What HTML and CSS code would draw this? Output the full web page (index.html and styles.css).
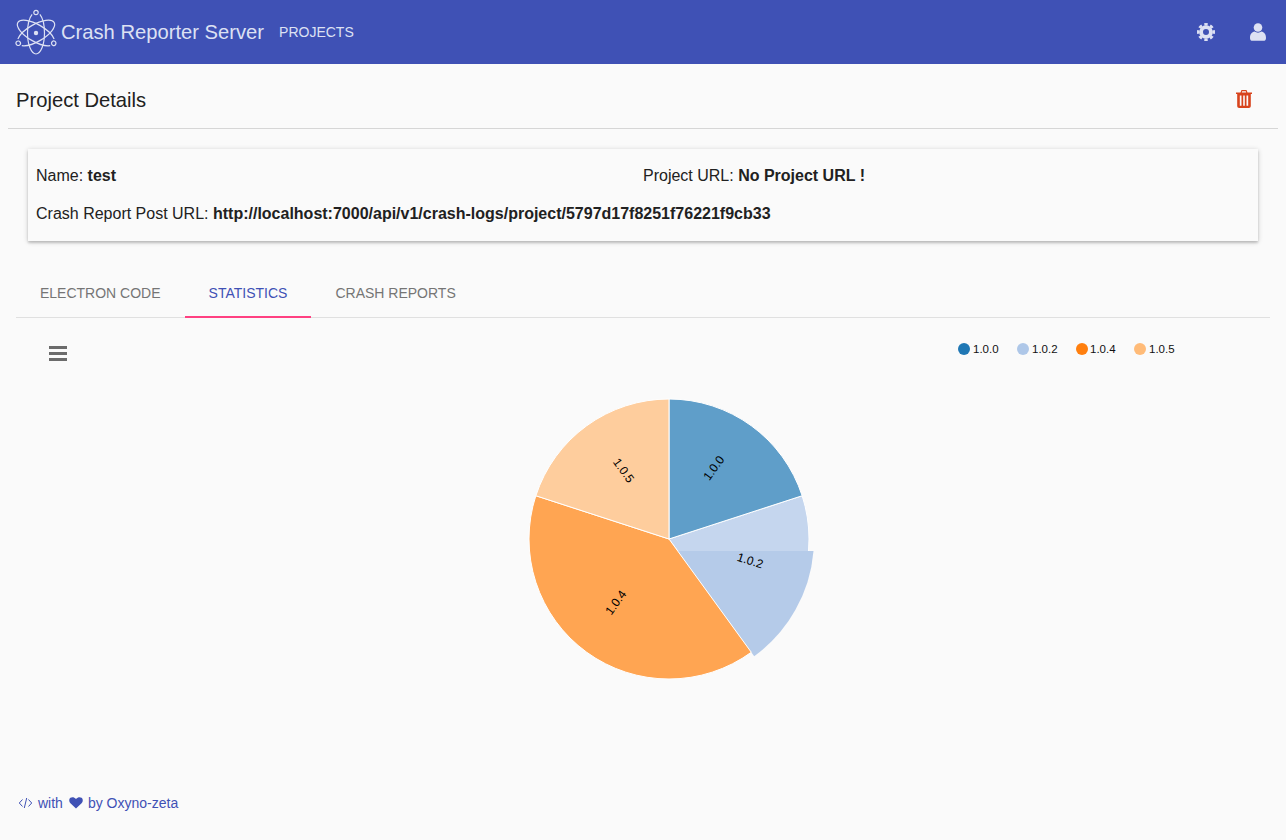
FILE: index.html
```html
<!DOCTYPE html>
<html lang="en">
<head>
  <meta charset="UTF-8" />
  <title>Crash Reporter Server</title>
  <link rel="stylesheet" href="styles.css">
</head>
<body>

  <!-- Toolbar -->
  <header class="toolbar">
    <svg class="logo" viewBox="0 0 42 46" fill="none" stroke="currentColor" stroke-width="1.200">
      <g id="orbit">
        <ellipse cx="21" cy="24" rx="8.500" ry="21" pathLength="100" stroke-dasharray="70 10 20"/>
        <circle cx="21" cy="3.500" r="2.200"/>
      </g>
      <use href="#orbit" transform="rotate(120 21 24)"/>
      <use href="#orbit" transform="rotate(240 21 24)"/>
      <circle cx="21" cy="24" r="2.200" fill="currentColor" stroke="none"/>
    </svg>
    <span class="app-title">Crash Reporter Server</span>
    <a class="nav-link">PROJECTS</a>
    <span class="spacer"></span>
    <svg class="tool-icon gear" viewBox="0 0 18 18" fill="none" stroke="currentColor">
      <circle cx="9" cy="9" r="7.700" stroke-width="2.600" pathLength="48" stroke-dasharray="3.400 2.600" stroke-dashoffset="1.700"/>
      <circle cx="9" cy="9" r="4.900" stroke-width="3.800"/>
    </svg>
    <svg class="tool-icon user" viewBox="0 0 16 18">
      <circle cx="8" cy="4.500" r="4.300" fill="currentColor"/>
      <path fill="currentColor" d="M0 15C0 11 2 9 4.500 8.500C6.500 10 9.500 10 11.500 8.500C14 9 16 11 16 15C16 17 15 17.800 13.500 17.800H2.500C1 17.800 0 17 0 15Z"/>
    </svg>
  </header>

  <main class="content">
    <div class="page-head">
      <h1>Project Details</h1>
      <svg class="trash" viewBox="0 0 16 18" fill="currentColor">
        <path fill-rule="evenodd" d="M5.500 0H10.500L11.500 2.500H16V4H14.800V16C14.800 17.200 14 18 12.800 18H3.200C2 18 1.200 17.200 1.200 16V4H0V2.500H4.500ZM6.200 1.300L5.800 2.500H10.200L9.800 1.300ZM3.800 5.500V15.800H5.500V5.500ZM7.200 5.500V15.800H8.800V5.500ZM10.500 5.500V15.800H12.200V5.500Z"/>
      </svg>
    </div>

    <section class="card">
      <div class="card-row">
        <p class="half">Name: <b>test</b></p>
        <p class="half">Project URL: <b>No Project URL !</b></p>
      </div>
      <p>Crash Report Post URL: <b>http://localhost:7000/api/v1/crash-logs/project/5797d17f8251f76221f9cb33</b></p>
    </section>

    <nav class="tabs">
      <a class="tab">ELECTRON CODE</a>
      <a class="tab active">STATISTICS</a>
      <a class="tab">CRASH REPORTS</a>
    </nav>

    <!-- Grafico -->
    <section class="chart">
      <div class="menu-icon"><i></i><i></i><i></i></div>
      <svg class="pie" viewBox="0 0 1254 460">
        <g class="legend">
          <circle cx="948" cy="31" r="6" fill="#1f77b4"/><text x="957" y="35">1.0.0</text>
          <circle cx="1007" cy="31" r="6" fill="#aec7e8"/><text x="1016" y="35">1.0.2</text>
          <circle cx="1066" cy="31" r="6" fill="#ff7f0e"/><text x="1074" y="35">1.0.4</text>
          <circle cx="1124" cy="31" r="6" fill="#ffbb78"/><text x="1133" y="35">1.0.5</text>
        </g>
        <g transform="translate(653 221)">
          <path class="slice" fill="#c5d6ee" d="M0 0L133.150 -43.260A140 140 0 0 1 82.290 113.260Z"/>
          <path fill="#b5cbe9" d="M8.700 12H144.500A145 145 0 0 1 85.200 117.300Z"/>
          <path class="slice" fill="#5f9ec9" d="M0 0V-140A140 140 0 0 1 133.150 -43.260Z"/>
          <path class="slice" fill="#ffa552" d="M0 0L82.290 113.260A140 140 0 0 1 -133.150 -43.260Z"/>
          <path class="slice" fill="#fecd9d" d="M0 0L-133.150 -43.260A140 140 0 0 1 0 -140Z"/>
          <g class="labels">
            <text transform="translate(45.500 -70.500) rotate(-54)">1.0.0</text>
            <text transform="translate(81 22.500) rotate(18)">1.0.2</text>
            <text transform="translate(-52.500 64) rotate(-54)">1.0.4</text>
            <text transform="translate(-46 -68) rotate(54)">1.0.5</text>
          </g>
        </g>
      </svg>
    </section>
  </main>

  <footer class="foot">
    <svg class="code-icon" viewBox="0 0 14 12" fill="none" stroke="currentColor" stroke-width="1"><path d="M4 2.500L0.800 6L4 9.500M10 2.500L13.200 6L10 9.500M8.200 1L5.800 11"/></svg>
    <span>with</span>
    <svg class="heart" viewBox="0 0 16 14"><path fill="currentColor" d="M8 13.500L1.500 7.300C-0.500 5.200 -0.200 2.300 1.500 1C3.300 -0.300 6 0 8 2.300C10 0 12.700 -0.300 14.500 1C16.200 2.300 16.500 5.200 14.500 7.300Z"/></svg>
    <span>by Oxyno-zeta</span>
  </footer>

</body>
</html>
```

FILE: styles.css
```css
body {
  margin: 0;
  height: 840px;
  overflow: hidden;
  position: relative;
  background: #fafafa;
  color: #212121;
  font-family: "Liberation Sans", Arial, sans-serif;
}

.toolbar {
  display: flex;
  align-items: center;
  height: 64px;
  padding: 0 20px 0 15px;
  background: #3f51b5;
  color: #dde1f3;
}
.logo {
  width: 42px;
  height: 46px;
  margin-right: 4px;
}
.app-title {
  font-size: 20.2px;
}
.nav-link {
  margin-left: 15px;
  font-size: 14px;
}
.spacer {
  flex: 1;
}
.tool-icon {
  height: 18px;
}
.gear {
  width: 18px;
}
.user {
  width: 16px;
  margin-left: 35px;
}

.content {
  padding: 0 8px;
}
.page-head {
  display: flex;
  align-items: center;
  justify-content: space-between;
  height: 56px;
  padding: 8px 26px 0 8px;
  border-bottom: 1px solid #d6d6d6;
}
.page-head h1 {
  margin: 0;
  font-size: 20.2px;
  font-weight: 400;
}
.trash {
  width: 16px;
  height: 18px;
  margin-top: -2px;
  color: #d8431c;
}

.card {
  margin: 20px 20px 0;
  height: 92px;
  padding: 8px;
  box-sizing: border-box;
  font-size: 16px;
  box-shadow: 0 2px 2px rgba(0,0,0,0.14), 0 1px 5px rgba(0,0,0,0.2);
}
.card p {
  margin: 0;
  line-height: 18px;
  padding: 10px 0;
}
.card-row {
  display: flex;
}
.half {
  width: 607px;
}

.tabs {
  display: flex;
  margin: 28px 8px 0;
  height: 48px;
  border-bottom: 1px solid #e0e0e0;
}
.tab {
  display: flex;
  align-items: center;
  padding: 0 24px;
  font-size: 14px;
  color: #757575;
  margin-bottom: -1px;
  border-bottom: 2px solid transparent;
  box-sizing: border-box;
}
.tab.active {
  color: #3f51b5;
  border-bottom-color: #ff4081;
}

.chart {
  position: relative;
  margin: 0 8px;
}
.pie {
  display: block;
  width: 1254px;
  height: 460px;
}
.legend text {
  font-size: 11.5px;
  fill: #111;
}
.slice {
  stroke: #fff;
  stroke-width: 1;
}
.labels text {
  font-size: 12px;
  fill: #000;
  text-anchor: middle;
  dominant-baseline: middle;
}
.menu-icon {
  position: absolute;
  left: 33px;
  top: 28px;
  display: flex;
  flex-direction: column;
  gap: 3px;
}
.menu-icon i {
  display: block;
  width: 18px;
  height: 3px;
  background: #6b6b6b;
}

.foot {
  position: absolute;
  left: 18px;
  top: 795px;
  display: flex;
  align-items: center;
  gap: 5px;
  height: 16px;
  font-size: 14px;
  color: #3f51b5;
}
.code-icon {
  width: 15px;
  height: 12px;
}
.heart {
  width: 14px;
  height: 12px;
  margin-left: 1px;
}
```
